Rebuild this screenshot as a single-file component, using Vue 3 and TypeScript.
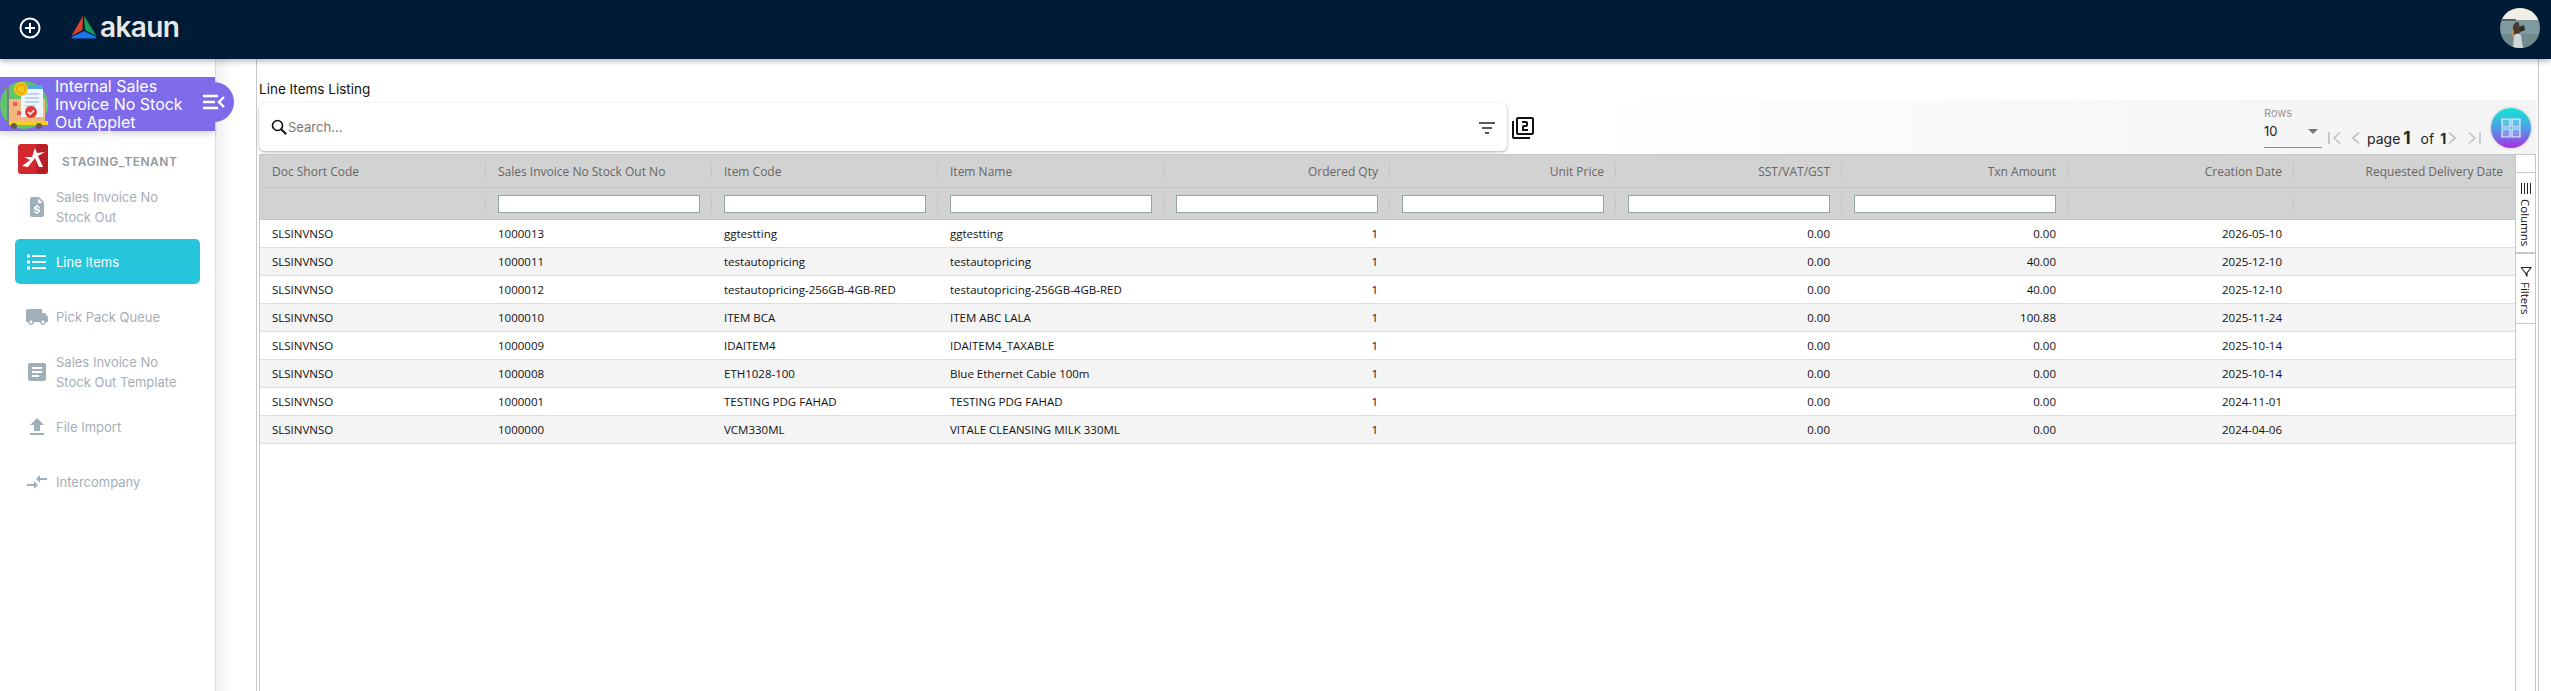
<template>
  <div class="page">
    <header class="topbar">
      <svg class="add-icon" viewBox="0 0 24 24" width="24" height="24">
        <circle cx="12" cy="12" r="9.5" fill="none" stroke="#fff" stroke-width="2" />
        <path d="M12 7v10M7 12h10" stroke="#fff" stroke-width="2" fill="none" />
      </svg>
      <div class="brand">
        <svg viewBox="0 0 26 24" width="26" height="24">
          <path d="M12 0.5 L11.5 15 L0.5 21z" fill="#d8432c" />
          <path d="M13 0.5 L25.5 21 L14 15z" fill="#12a05c" />
          <path d="M13 16 L25.5 22 Q25.5 23.5 24 23.5 L2 23.5 Q0.5 23.5 0.5 22z" fill="#1a73e8" />
        </svg>
        <span class="brand-name">akaun</span>
      </div>
      <svg class="avatar" viewBox="0 0 40 40" width="40" height="40">
        <defs>
          <clipPath id="avatar-clip"><circle cx="20" cy="20" r="20" /></clipPath>
        </defs>
        <g clip-path="url(#avatar-clip)">
          <rect width="40" height="40" fill="#7e9a9e" />
          <rect width="40" height="12" fill="#f0eee6" />
          <rect y="11" width="16" height="2" fill="#4e6466" />
          <rect y="26" width="40" height="14" fill="#6f8b8e" />
          <path d="M13 18 q3 -6 6 -3 l1 8 l-2 7 l-5 0z" fill="#4a3a2c" />
          <path d="M19 19 l5 -2 l1 5 l-5 2z" fill="#2d2a28" />
          <path d="M14 27 q4 -3 7 0 l2 13 h-10z" fill="#cfd6d8" />
          <path d="M12 22 l2 0 l0 8 l-2 0z" fill="#b98a5c" />
        </g>
      </svg>
    </header>

    <div class="content">
      <aside class="sidebar">
        <div class="applet">
          <svg class="applet-icon" viewBox="0 0 50 50" width="50" height="50">
            <circle cx="24" cy="25" r="24" fill="#62c56a" />
            <path d="M2 7h7v38H7V9H2z" fill="#7d7d8a" />
            <rect x="9" y="19" width="36" height="24" fill="#f4b77e" />
            <rect x="21" y="5" width="22" height="32" fill="#eef6fc" />
            <rect x="21" y="5" width="22" height="4" fill="#4ea5e8" />
            <path d="M25 14h14M25 18h14M25 22h14M25 26h10" stroke="#a9cdea" stroke-width="1.4" />
            <rect x="13" y="22" width="4" height="4" fill="#ea5a5a" />
            <rect x="17" y="31" width="4" height="4" fill="#ea5a5a" />
            <rect x="9" y="41" width="39" height="4" fill="#f7cf1e" />
            <circle cx="21" cy="9" r="7" fill="#f5c518" />
            <circle cx="21" cy="9" r="4.4" fill="none" stroke="#dc9f0c" stroke-width="1.2" />
            <circle cx="31" cy="32" r="6" fill="#e53935" />
            <path d="M28 32l2.2 2.2 4-4" stroke="#fff" stroke-width="1.6" fill="none" />
            <circle cx="14" cy="46" r="3" fill="#6a5a4e" />
            <circle cx="39" cy="46" r="3" fill="#6a5a4e" />
          </svg>
          <span class="applet-title">Internal Sales Invoice No Stock Out Applet</span>
          <span class="applet-toggle">
            <svg viewBox="0 0 24 16" width="24" height="16">
              <path d="M1 2h15M1 8h12M1 14h15" stroke="#fff" stroke-width="2.4" fill="none" />
              <path d="M22 3l-5 5 5 5" stroke="#fff" stroke-width="2.4" fill="none" />
            </svg>
          </span>
        </div>

        <div class="tenant">
          <svg viewBox="0 0 30 30" width="30" height="30">
            <rect width="30" height="30" rx="3" fill="#d2282e" />
            <rect x="18" width="12" height="30" rx="3" fill="#b81f27" />
            <path d="M17 4 l2 5 l8 -1 l-7 4 l5 11 l-4 0 l-4 -9 l-7 9 l-6 -1 l8 -6 l-6 -3 l8 0z" fill="#fff" />
          </svg>
          <span>STAGING_TENANT</span>
        </div>

        <nav class="nav">
          <a v-for="item in navItems" :key="item.label" class="nav-item" :class="{ active: item.active }">
            <svg class="nav-icon" viewBox="0 0 24 24" width="24" height="24">
              <path :d="item.icon" fill="currentColor" />
            </svg>
            <span>{{ item.label }}</span>
          </a>
        </nav>
      </aside>

      <div class="rail"></div>

      <main class="main">
        <h1 class="listing-title">Line Items Listing</h1>

        <div class="toolbar">
          <div class="search-card">
            <svg class="search-icon" viewBox="0 0 16 16" width="16" height="16">
              <circle cx="6.5" cy="6.5" r="5" fill="none" stroke="#111" stroke-width="1.6" />
              <path d="M10.2 10.2l5 5" stroke="#111" stroke-width="2" />
            </svg>
            <input class="search-input" type="text" placeholder="Search..." />
            <svg class="filter-icon" viewBox="0 0 16 12" width="16" height="12">
              <path d="M0 1h16M3 6h10M6 11h4" stroke="#222" stroke-width="1.7" fill="none" />
            </svg>
          </div>
          <svg class="stack-icon" viewBox="0 0 24 24" width="24" height="24">
            <path d="M3 5H1v16c0 1.1.9 2 2 2h16v-2H3V5zm18-4H7c-1.1 0-2 .9-2 2v14c0 1.1.9 2 2 2h14c1.1 0 2-.9 2-2V3c0-1.1-.9-2-2-2zm0 16H7V3h14v14zm-4-4h-4v-2h2c1.1 0 2-.89 2-2V7c0-1.11-.9-2-2-2h-4v2h4v2h-2c-1.1 0-2 .89-2 2v4h6v-2z" fill="#111" />
          </svg>

          <div class="pager">
            <div class="rows">
              <span class="rows-label">Rows</span>
              <div class="rows-select">
                <span>10</span>
                <i class="rows-caret"></i>
              </div>
            </div>
            <div class="pager-nav">
              <svg viewBox="0 0 14 14" width="14" height="14">
                <path d="M1 1v12" stroke="#c3b8b0" stroke-width="1.6" />
                <path d="M12 1.5L6 7l6 5.5" stroke="#bcc4c8" stroke-width="1.6" fill="none" />
              </svg>
              <svg class="pager-prev" viewBox="0 0 8 14" width="8" height="14">
                <path d="M7 1.5L1 7l6 5.5" stroke="#bcbcbc" stroke-width="1.6" fill="none" />
              </svg>
              <span class="page-text">page<b>1</b> of <b class="page-total">1</b></span>
              <svg class="pager-next" viewBox="0 0 8 14" width="8" height="14">
                <path d="M1 1.5L7 7l-6 5.5" stroke="#bcbcbc" stroke-width="1.6" fill="none" />
              </svg>
              <svg viewBox="0 0 14 14" width="14" height="14">
                <path d="M2 1.5L8 7l-6 5.5" stroke="#bcc4c8" stroke-width="1.6" fill="none" />
                <path d="M13 1v12" stroke="#bcc4c8" stroke-width="1.6" />
              </svg>
            </div>
            <button class="fab" type="button">
              <svg viewBox="0 0 20 20" width="20" height="20">
                <path d="M1 1h8v8H1zM11 1h8v8h-8zM1 11h8v8H1zM11 11h8v8h-8z" fill="#ffffff30" stroke="#fff" stroke-opacity=".85" stroke-width="1.2" />
              </svg>
            </button>
          </div>
        </div>

        <section class="table-wrap">
          <div class="grid">
            <div class="head-row">
              <div v-for="col in columns" :key="col.title" class="head-cell" :class="{ right: col.right }">
                {{ col.title }}
              </div>
            </div>
            <div class="filter-row">
              <div v-for="col in columns" :key="col.title" class="filter-cell">
                <input v-if="col.filter" class="filter-input" type="text" />
              </div>
            </div>
            <div v-for="row in rows" :key="row.no" class="data-row">
              <div class="cell">SLSINVNSO</div>
              <div class="cell">{{ row.no }}</div>
              <div class="cell">{{ row.code }}</div>
              <div class="cell">{{ row.name }}</div>
              <div class="cell right">1</div>
              <div class="cell right"></div>
              <div class="cell right">0.00</div>
              <div class="cell right">{{ row.amount }}</div>
              <div class="cell right">{{ row.date }}</div>
              <div class="cell right"></div>
            </div>
          </div>
          <div class="side-bar">
            <button class="side-tab" type="button">
              <svg viewBox="0 0 12 12" width="12" height="12">
                <path d="M1.5 0v11M4.5 0v11M7.5 0v11M10.5 0v11" stroke="#222" stroke-width="1" />
              </svg>
              <span>Columns</span>
            </button>
            <button class="side-tab filters" type="button">
              <svg viewBox="0 0 12 12" width="12" height="12">
                <path d="M1 1.500h10L7 7v3.500M1 1.500L5.500 7l1.500 3.500" fill="none" stroke="#222" stroke-width="1.1" />
              </svg>
              <span>Filters</span>
            </button>
          </div>
        </section>
      </main>
    </div>
  </div>
</template>

<script setup lang="ts">
interface NavItem {
  label: string
  icon: string
  active?: boolean
}

interface Column {
  title: string
  right?: boolean
  filter?: boolean
}

interface Row {
  no: string
  code: string
  name: string
  amount: string
  date: string
}

const navItems: NavItem[] = [
  {
    label: 'Sales Invoice No Stock Out',
    icon: 'M7 2h7l5 5v13a2 2 0 0 1-2 2H7a2 2 0 0 1-2-2V4a2 2 0 0 1 2-2zm6 1.5V8h4.5zM11.2 10v1.1c-1.3.2-2.2 1-2.2 2.1 0 1.300 1.100 1.800 2.500 2.100 1 .2 1.300.5 1.300.9s-.5.8-1.300.8c-.9 0-1.400-.4-1.500-1H8.800c.1 1.200 1 1.900 2.400 2.100V19h1.600v-1.100c1.300-.2 2.300-1 2.300-2.100 0-1.400-1.100-1.900-2.600-2.200-.9-.2-1.200-.5-1.200-.8 0-.4.4-.7 1.100-.7.8 0 1.200.3 1.300.9h1.300c-.1-1.100-.9-1.800-2.200-2V10z'
  },
  {
    label: 'Line Items',
    active: true,
    icon: 'M7 5h14v2H7zM7 11h14v2H7zM7 17h14v2H7zM2 4.500h3v3H2zM2 10.500h3v3H2zM2 16.500h3v3H2z'
  },
  {
    label: 'Pick Pack Queue',
    icon: 'M20 8h-3V4H3c-1.100 0-2 .9-2 2v11h2c0 1.660 1.340 3 3 3s3-1.340 3-3h6c0 1.660 1.340 3 3 3s3-1.340 3-3h2v-5l-3-4zM6 18.500c-.83 0-1.500-.67-1.500-1.500s.67-1.500 1.500-1.500 1.500.67 1.500 1.500-.67 1.500-1.500 1.500zm12 0c-.83 0-1.500-.67-1.500-1.500s.67-1.500 1.500-1.500 1.500.67 1.500 1.500-.67 1.500-1.500 1.500z'
  },
  {
    label: 'Sales Invoice No Stock Out Template',
    icon: 'M19 3H5c-1.100 0-2 .9-2 2v14c0 1.100.9 2 2 2h14c1.100 0 2-.9 2-2V5c0-1.100-.9-2-2-2zm-5 14H7v-2h7v2zm3-4H7v-2h10v2zm0-4H7V7h10v2z'
  },
  {
    label: 'File Import',
    icon: 'M9 16h6v-6h4l-7-7-7 7h4zm-4 2h14v2H5z'
  },
  {
    label: 'Intercompany',
    icon: 'M9.010 14H2v2h7.010v3L13 15l-3.990-4v3zm5.980-1v-3H22V8h-7.010V5L11 9l3.990 4z'
  }
]

const columns: Column[] = [
  { title: 'Doc Short Code' },
  { title: 'Sales Invoice No Stock Out No', filter: true },
  { title: 'Item Code', filter: true },
  { title: 'Item Name', filter: true },
  { title: 'Ordered Qty', right: true, filter: true },
  { title: 'Unit Price', right: true, filter: true },
  { title: 'SST/VAT/GST', right: true, filter: true },
  { title: 'Txn Amount', right: true, filter: true },
  { title: 'Creation Date', right: true },
  { title: 'Requested Delivery Date', right: true }
]

const rows: Row[] = [
  { no: '1000013', code: 'ggtestting', name: 'ggtestting', amount: '0.00', date: '2026-05-10' },
  { no: '1000011', code: 'testautopricing', name: 'testautopricing', amount: '40.00', date: '2025-12-10' },
  { no: '1000012', code: 'testautopricing-256GB-4GB-RED', name: 'testautopricing-256GB-4GB-RED', amount: '40.00', date: '2025-12-10' },
  { no: '1000010', code: 'ITEM BCA', name: 'ITEM ABC LALA', amount: '100.88', date: '2025-11-24' },
  { no: '1000009', code: 'IDAITEM4', name: 'IDAITEM4_TAXABLE', amount: '0.00', date: '2025-10-14' },
  { no: '1000008', code: 'ETH1028-100', name: 'Blue Ethernet Cable 100m', amount: '0.00', date: '2025-10-14' },
  { no: '1000001', code: 'TESTING PDG FAHAD', name: 'TESTING PDG FAHAD', amount: '0.00', date: '2024-11-01' },
  { no: '1000000', code: 'VCM330ML', name: 'VITALE CLEANSING MILK 330ML', amount: '0.00', date: '2024-04-06' }
]
</script>

<style>
html,
body {
  margin: 0;
  background: #fff;
  overflow: hidden;
}
</style>

<style scoped>
.page {
  height: 691px;
  display: flex;
  flex-direction: column;
  font-family: Inter, "Noto Sans", sans-serif;
  overflow: hidden;
}

.topbar {
  height: 59px;
  flex: none;
  background: #001b35;
  display: flex;
  align-items: center;
  box-shadow: 0 2px 6px rgba(0, 0, 0, 0.3);
  position: relative;
  z-index: 3;
}

.add-icon {
  margin-left: 18px;
  margin-top: -3px;
}

.brand {
  display: flex;
  align-items: center;
  margin-left: 29px;
  margin-top: -5px;
  gap: 3px;
}

.brand-name {
  color: #e9e9e9;
  font-size: 28px;
  font-weight: 600;
  letter-spacing: -0.6px;
  line-height: 24px;
}

.avatar {
  margin-left: auto;
  margin-right: 11px;
  margin-top: -3px;
}

.content {
  flex: 1;
  display: flex;
  min-height: 0;
}

.sidebar {
  width: 215px;
  flex: none;
  border-right: 1px solid #dcdcdc;
  padding-top: 18px;
  box-sizing: content-box;
}

.applet {
  height: 54px;
  background: #7e6bea;
  display: flex;
  align-items: center;
  position: relative;
  box-shadow: 0 4px 6px rgba(0, 0, 0, 0.12);
}

.applet-icon {
  flex: none;
  margin-top: 2px;
}

.applet-title {
  margin-left: 5px;
  width: 140px;
  color: #fff;
  font-size: 16px;
  line-height: 18px;
}

.applet-toggle {
  position: absolute;
  left: 190px;
  top: 5px;
  width: 44px;
  height: 40px;
  background: #7e6bea;
  border-radius: 0 20px 20px 0;
  display: flex;
  align-items: center;
  justify-content: flex-end;
  padding-right: 8px;
  box-sizing: border-box;
}

.tenant {
  display: flex;
  align-items: center;
  gap: 14px;
  padding: 13px 0 0 18px;
  color: #93999e;
  font-size: 12px;
  font-weight: 600;
  letter-spacing: 0.5px;
}

.tenant span {
  margin-top: 4px;
}

.nav {
  display: flex;
  flex-direction: column;
  gap: 10px;
  margin: 10px 15px 0;
}

.nav-item {
  min-height: 45px;
  display: flex;
  align-items: center;
  gap: 7px;
  padding: 0 8px 0 10px;
  border-radius: 5px;
  color: #a6aeb4;
  font-size: 13px;
  line-height: 20px;
}

.nav-item.active {
  background: #25c6dc;
  color: #fff;
}

.nav-icon {
  flex: none;
  color: #9fb0bb;
}

.active .nav-icon {
  color: #fff;
}

.rail {
  width: 40px;
  flex: none;
  border-right: 1px solid #c9c9c9;
  background: linear-gradient(90deg, #f2f2f2, #fff 45%);
}

.main {
  width: 2278px;
  flex: none;
  margin-left: 2px;
  display: flex;
  flex-direction: column;
  min-height: 0;
  position: relative;
}

.main::after {
  content: "";
  position: absolute;
  top: -59px;
  bottom: 0;
  right: -2px;
  width: 1px;
  background: #c9c9c9;
}

.listing-title {
  margin: 21px 0 0 0;
  height: 20px;
  font-size: 13.5px;
  font-weight: 400;
  line-height: 18px;
  color: #111;
}

.toolbar {
  height: 54px;
  flex: none;
  display: flex;
  align-items: flex-start;
  background: linear-gradient(90deg, #fff 58%, #f5f5f5 90%);
}

.search-card {
  width: 1248px;
  height: 48px;
  margin-top: 3px;
  flex: none;
  background: #fff;
  border-radius: 6px;
  box-shadow: 0 1px 3px rgba(0, 0, 0, 0.35);
  display: flex;
  align-items: center;
  padding: 0 12px;
  box-sizing: border-box;
}

.search-icon {
  flex: none;
}

.search-input {
  flex: 1;
  border: 0;
  outline: 0;
  background: transparent;
  margin-left: 1px;
  padding: 0;
  font-family: Inter, sans-serif;
  font-size: 13px;
}

.search-input::placeholder {
  color: #777;
}

.filter-icon {
  flex: none;
  margin-top: 2px;
}

.stack-icon {
  flex: none;
  margin: 16px 0 0 4px;
}

.pager {
  margin-left: auto;
  display: flex;
  align-items: flex-start;
  height: 54px;
}

.rows {
  width: 58px;
  display: flex;
  flex-direction: column;
  padding-top: 7px;
}

.rows-label {
  font-size: 11px;
  line-height: 13px;
  color: #9a9a9a;
}

.rows-select {
  height: 27px;
  border-bottom: 1px solid #8a8a8a;
  display: flex;
  justify-content: space-between;
  align-items: flex-start;
  font-size: 13px;
  line-height: 22px;
  color: #222;
}

.rows-caret {
  margin: 9px 4px 0 0;
  border-left: 5px solid transparent;
  border-right: 5px solid transparent;
  border-top: 5px solid #777;
}

.pager-nav {
  width: 153px;
  display: flex;
  align-items: center;
  margin: 30px 0 0 6px;
  height: 16px;
}

.pager-prev {
  margin-left: 10px;
}

.pager-next {
  margin: 0 11px 0 auto;
}

.page-text {
  margin-left: 7px;
  font-size: 14px;
  color: #222;
  white-space: nowrap;
}

.page-text b {
  font-size: 17px;
  font-weight: 700;
  margin: 0 6px 0 3px;
}

.page-text .page-total {
  margin: 0 0 0 2px;
  font-size: 14px;
}

.fab {
  width: 40px;
  height: 40px;
  margin: 8px 6px 0 10px;
  border: 0;
  padding: 0;
  border-radius: 50%;
  background: linear-gradient(180deg, #12e8d4 0%, #4d9fe8 50%, #ab2ee0 100%);
  box-shadow: 0 0 3px rgba(0, 0, 0, 0.25);
  display: flex;
  align-items: center;
  justify-content: center;
}

.table-wrap {
  flex: 1;
  min-height: 0;
  display: flex;
  border: 1px solid #c2c8ca;
  border-bottom: 0;
  font-family: "Open Sans", "Noto Sans", sans-serif;
  font-size: 11.5px;
  width: 2277px;
  box-sizing: border-box;
}

.grid {
  width: 2255px;
  flex: none;
}

.head-row,
.filter-row,
.data-row {
  display: grid;
  grid-template-columns: repeat(9, 226px) 221px;
}

.head-row,
.filter-row {
  background: #d2d2d2;
  border-bottom: 1px solid #c0c4c4;
  box-sizing: border-box;
}

.head-row {
  height: 33px;
}

.filter-row {
  height: 32px;
}

.head-cell,
.cell {
  padding: 0 12px;
  box-sizing: border-box;
  white-space: nowrap;
  overflow: hidden;
  display: flex;
  align-items: center;
}

.head-cell {
  color: #666;
  font-size: 12px;
  font-weight: 500;
  position: relative;
}

.right {
  justify-content: flex-end;
}

.head-cell::after,
.filter-cell::after {
  content: "";
  position: absolute;
  right: 0;
  top: 8px;
  height: 16px;
  width: 1px;
  background: #c4c4c4;
}

.head-cell:last-child::after,
.filter-cell:last-child::after {
  display: none;
}

.filter-cell {
  position: relative;
  padding: 0 12px;
  box-sizing: border-box;
  display: flex;
  align-items: center;
}

.filter-input {
  width: 100%;
  height: 18px;
  box-sizing: border-box;
  border: 1px solid #95a5a6;
  background: #fff;
  border-radius: 0;
  padding: 0;
  outline: 0;
}

.data-row {
  height: 28px;
  box-sizing: border-box;
  border-bottom: 1px solid #dcdfdf;
  color: #111;
}

.data-row:nth-child(even) {
  background: #f4f4f4;
}

.side-bar {
  flex: 1;
  border-left: 1px solid #c2c8ca;
  padding-top: 17px;
  display: flex;
  flex-direction: column;
}

.side-tab {
  height: 82px;
  border: 0;
  border-top: 1px solid #c2c8ca;
  border-bottom: 2px solid #c2c8ca;
  background: #fff;
  padding: 10px 0 0;
  display: flex;
  flex-direction: column;
  align-items: center;
  gap: 4px;
  font-family: "Open Sans", sans-serif;
  font-size: 11.5px;
  color: #111;
}

.side-tab.filters {
  height: 70px;
  border-top: 0;
  border-bottom: 1px solid #c2c8ca;
  padding-top: 12px;
}

.side-tab span {
  writing-mode: vertical-rl;
}
</style>
